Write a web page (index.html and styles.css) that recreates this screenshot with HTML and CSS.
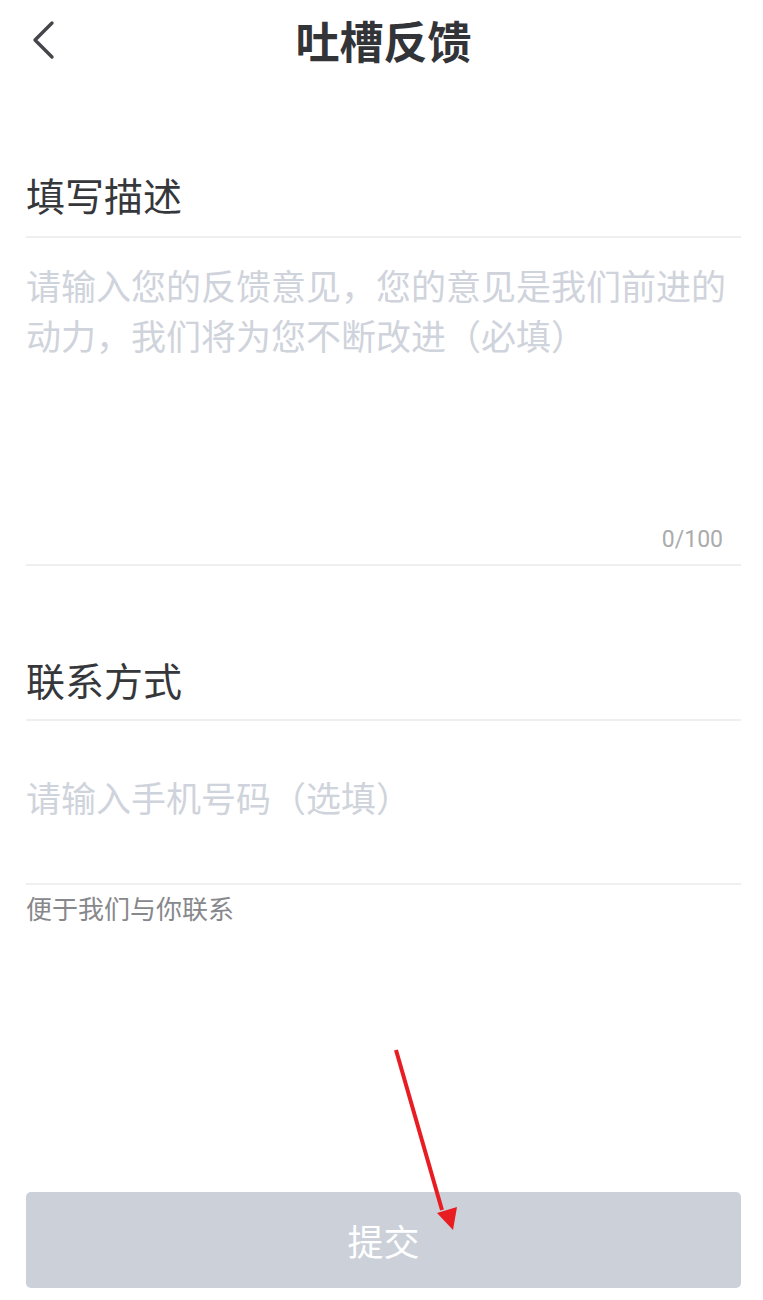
FILE: index.html
```html
<!DOCTYPE html>
<html lang="zh-CN">
<head>
  <meta charset="UTF-8" />
  <meta name="viewport" content="width=device-width, initial-scale=1.0"/>
  <title>吐槽反馈</title>
  <link rel="stylesheet" href="styles.css">
</head>
<body>
<div class="page">
  <header class="top-bar">
    <a class="back-btn" href="#" aria-label="返回">
      <svg width="24" height="40" viewBox="0 0 24 40">
        <polyline points="20,3 3,20 20,37" fill="none" stroke="#45464b" stroke-width="3.4" stroke-linecap="round" stroke-linejoin="round"/>
      </svg>
    </a>
    <h1 class="top-title">吐槽反馈</h1>
    <span></span>
  </header>

  <!-- description -->
  <div class="section-label">填写描述</div>
  <div class="desc-box">
    <textarea class="desc-input" maxlength="100" placeholder="请输入您的反馈意见，您的意见是我们前进的动力，我们将为您不断改进（必填）"></textarea>
    <div class="desc-count">0/100</div>
  </div>

  <!-- contact -->
  <div class="section-label contact-label">联系方式</div>
  <div class="phone-box">
    <input class="phone-input" type="tel" placeholder="请输入手机号码（选填）">
  </div>
  <p class="hint">便于我们与你联系</p>

  <button class="submit-btn" disabled>提交</button>

  <!-- annotation arrow -->
  <svg class="mark-arrow" width="80" height="200" viewBox="0 0 80 200">
    <line x1="18" y1="10" x2="64" y2="170" stroke="#e81d22" stroke-width="4"/>
    <polygon points="59,173 79,167 75,190" fill="#e81d22"/>
  </svg>
</div>
</body>
</html>
```

FILE: styles.css
```css
body {
  margin: 0;
  background: #fff;
  font-family: "Noto Sans CJK SC", "Noto Sans", sans-serif;
  color: #333;
}
.page {
  position: relative;
  width: 763px;
  min-height: 1300px;
  box-sizing: border-box;
  padding: 0 22px 0 26px;
}
.top-bar {
  display: grid;
  grid-template-columns: 1fr auto 1fr;
  height: 80px;
}
.back-btn {
  display: block;
  width: 24px;
  height: 40px;
  margin: 20px 0 0 6px;
}
.back-btn svg {
  display: block;
}
.top-title {
  margin: 0;
  font-size: 44px;
  line-height: 80px;
  font-weight: bold;
  color: #333438;
}
.section-label {
  margin-top: 86px;
  padding-bottom: 14px;
  font-size: 39px;
  line-height: 56px;
  color: #36373b;
  border-bottom: 2px solid #eeeff1;
}
.desc-box {
  padding: 22px 0 9px;
  border-bottom: 2px solid #eeeff1;
}
.desc-input {
  display: block;
  width: 100%;
  height: 265px;
  margin: 0;
  padding: 0;
  border: none;
  outline: none;
  resize: none;
  font-family: "Noto Sans CJK SC", sans-serif;
  font-size: 35px;
  line-height: 50px;
  color: #333;
  background: transparent;
}
.desc-input::placeholder,
.phone-input::placeholder {
  color: #cfd3db;
}
.desc-count {
  padding-right: 18px;
  text-align: right;
  font-family: Roboto, "Noto Sans", sans-serif;
  font-size: 23px;
  line-height: 30px;
  color: #ababab;
}
.contact-label {
  margin-top: 85px;
  padding-bottom: 12px;
}
.phone-box {
  padding: 51px 0 61px;
  border-bottom: 2px solid #eeeff1;
}
.phone-input {
  display: block;
  width: 100%;
  height: 50px;
  margin: 0;
  padding: 0;
  border: none;
  outline: none;
  font-family: "Noto Sans CJK SC", sans-serif;
  font-size: 35px;
  line-height: 50px;
  color: #333;
  background: transparent;
}
.hint {
  margin: 5px 0 0;
  font-size: 26px;
  line-height: 36px;
  color: #87888c;
}
.submit-btn {
  display: block;
  width: 100%;
  height: 96px;
  margin-top: 266px;
  border: none;
  border-radius: 5px;
  background: #cbd0d9;
  color: #fff;
  font-family: "Noto Sans CJK SC", sans-serif;
  font-size: 36px;
}
.mark-arrow {
  position: absolute;
  left: 378px;
  top: 1040px;
}
```
